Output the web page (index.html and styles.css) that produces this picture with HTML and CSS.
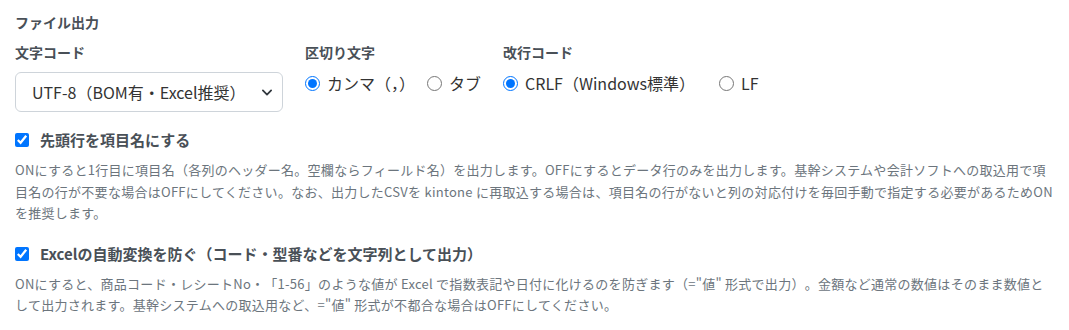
FILE: index.html
```html
<!DOCTYPE html>
<html lang="ja">
<head>
	<meta charset="UTF-8">
	<title>ファイル出力</title>
	<link rel="stylesheet" href="styles.css">
</head>
<body>
	<div class="section">
		<h3 class="section-title">ファイル出力</h3>
		<div class="opt-row">
			<div class="opt-group group-enc">
				<label class="opt-label" for="encoding">文字コード</label>
				<select id="encoding" class="opt-select">
					<option>UTF-8（BOM有・Excel推奨）</option>
					<option>UTF-8（BOM無）</option>
					<option>Shift_JIS</option>
				</select>
			</div>
			<div class="opt-group">
				<span class="opt-label">区切り文字</span>
				<div class="radios radios-delim">
					<label class="radio"><input type="radio" name="delim" checked>カンマ（，）</label>
					<label class="radio"><input type="radio" name="delim">タブ</label>
				</div>
			</div>
			<div class="opt-group">
				<span class="opt-label">改行コード</span>
				<div class="radios">
					<label class="radio radio-wide"><input type="radio" name="eol" checked>CRLF（Windows標準）</label>
					<label class="radio"><input type="radio" name="eol">LF</label>
				</div>
			</div>
		</div>

		<div class="check-block">
			<label class="check"><input type="checkbox" checked>先頭行を項目名にする</label>
			<p class="help">ONにすると1行目に項目名（各列のヘッダー名。空欄ならフィールド名）を出力します。OFFにするとデータ行のみを出力します。基幹システムや会計ソフトへの取込用で項目名の行が不要な場合はOFFにしてください。なお、出力したCSVを kintone に再取込する場合は、項目名の行がないと列の対応付けを毎回手動で指定する必要があるためONを推奨します。</p>
		</div>

		<div class="check-block">
			<label class="check"><input type="checkbox" checked>Excelの自動変換を防ぐ（コード・型番などを文字列として出力）</label>
			<p class="help">ONにすると、商品コード・レシートNo・「1-56」のような値が Excel で指数表記や日付に化けるのを防ぎます（="値" 形式で出力）。金額など通常の数値はそのまま数値として出力されます。基幹システムへの取込用など、="値" 形式が不都合な場合はOFFにしてください。</p>
		</div>
	</div>
</body>
</html>
```

FILE: styles.css
```css
*{
	box-sizing: border-box;
	margin: 0;
	padding: 0;
}
body{
	font-family: "Noto Sans CJK JP", "Noto Sans", sans-serif;
	color: #495057;
	background: #fff;
}
.section{
	padding: 12px 15px;
}
.section-title{
	font-size: 14px;
	font-weight: bold;
	line-height: 21px;
	margin-bottom: 9px;
}
.opt-row{
	display: flex;
	gap: 22px;
}
.opt-group{
	display: flex;
	flex-direction: column;
}
.opt-label{
	font-size: 14px;
	font-weight: bold;
	line-height: 21px;
	margin-bottom: 9px;
}
.opt-select{
	appearance: none;
	width: 268px;
	height: 40px;
	padding: 0 36px 0 16px;
	font-family: inherit;
	font-size: 16px;
	color: #333;
	background: #fff url("data:image/svg+xml,%3csvg xmlns='http://www.w3.org/2000/svg' viewBox='0 0 16 16'%3e%3cpath fill='none' stroke='%23343a40' stroke-linecap='round' stroke-linejoin='round' stroke-width='2.6' d='m2 5 6 6 6-6'/%3e%3c/svg%3e") no-repeat right 8px center / 14px 11px;
	border: 1px solid #ced4da;
	border-radius: 6px;
	text-spacing-trim: space-all;
}
.radios{
	display: flex;
	gap: 20px;
}
.radios-delim{
	gap: 12px;
}
.radio{
	display: flex;
	align-items: center;
	font-size: 16px;
	line-height: 22px;
	color: #333;
}
.radio-wide{
	margin-right: 4px;
	text-spacing-trim: space-all;
}
.radio input{
	margin: 0 7px 0 0;
	width: 15px;
	height: 15px;
}
.check-block{
	margin-top: 17px;
}
.check-block + .check-block{
	margin-top: 19px;
}
.check{
	display: flex;
	align-items: center;
	font-size: 15px;
	font-weight: bold;
	line-height: 22px;
	text-spacing-trim: space-all;
}
.check input{
	margin: 0 11px 0 0;
	width: 14px;
	height: 14px;
}
.help{
	margin-top: 8px;
	font-size: 13px;
	line-height: 21.5px;
	letter-spacing: 0.27px;
	color: #6c757d;
	text-spacing-trim: space-all;
}
```
